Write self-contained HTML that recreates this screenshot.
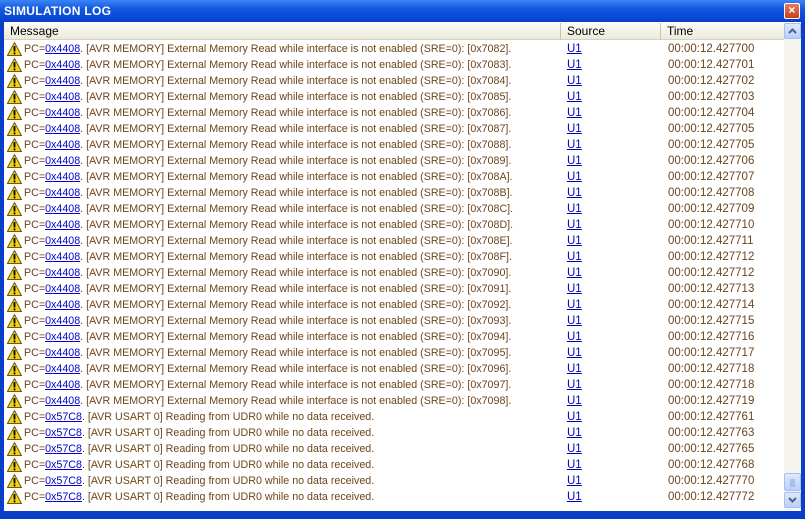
<!DOCTYPE html>
<html><head><style>
*{margin:0;padding:0;box-sizing:border-box}
body{width:805px;height:519px;overflow:hidden;background:#0a3dc8;font-family:"Liberation Sans",sans-serif;position:relative}
#title{position:absolute;left:0;top:0;width:805px;height:22px;background:linear-gradient(#3b85f5,#1358e0 40%,#0a48d6 80%,#0a3fc4);color:#fff;font-weight:bold;font-size:12px;line-height:22px;padding-left:4px;letter-spacing:0.3px}
#close{position:absolute;right:5px;top:3px;width:16px;height:16px;background:linear-gradient(#e87a5a,#c8401c);border:1px solid #fff;border-radius:2px;color:#fff;font-size:12px;line-height:13px;text-align:center;font-weight:bold}
#client{position:absolute;left:4px;top:22px;width:797px;height:489px;background:#fff}
#hdr{position:absolute;left:0;top:1px;width:780px;height:17px;background:linear-gradient(#fcfcf9,#ebeadb);border-bottom:1px solid #d6d2c2;font-size:12px;color:#000;line-height:17px}
#hdr div{position:absolute;top:0;height:17px;padding-left:6px;border-right:1px solid #c7c5b2}
.row{position:absolute;left:0;height:16px;width:780px;font-size:10.7px;line-height:16px;color:#6e4418;white-space:nowrap}
.row a{color:#0000c8;text-decoration:underline}
.ic{position:absolute;left:3px;top:1px;width:15px;height:14px}
.m{position:absolute;left:20px}
.s{position:absolute;left:563px;font-size:11.5px}
.t{position:absolute;left:664px;font-size:11.5px}
#sb{position:absolute;left:780px;top:1px;width:17px;height:487px;background:#f5f4ee}
.btn{position:absolute;left:0;width:17px;height:16px;background:linear-gradient(#dfe9fd,#b9cffa);border:1px solid #a8bff0;border-radius:2px}
</style></head><body>
<div id="title">SIMULATION LOG<div id="close">×</div></div>
<div id="client">
<div id="hdr"><div style="left:0;width:557px">Message</div><div style="left:557px;width:100px">Source</div><div style="left:657px;width:123px;border:none">Time</div></div>
<div id="rows"></div>
<div id="sb">
<div class="btn" style="top:0"><svg width="15" height="14"><path d="M4 9 L7.5 5.5 L11 9" stroke="#4d6185" stroke-width="2" fill="none"/></svg></div>
<div class="btn" style="top:450px;height:18px"><svg width="15" height="16"><path d="M5 6h5M5 8h5M5 10h5M5 12h5" stroke="#8aa4d8"/></svg></div>
<div class="btn" style="top:469px"><svg width="15" height="14"><path d="M4 5 L7.5 8.5 L11 5" stroke="#4d6185" stroke-width="2" fill="none"/></svg></div>
</div>
</div>
<script>
var h='';
var mem=['7082','7083','7084','7085','7086','7087','7088','7089','708A','708B','708C','708D','708E','708F','7090','7091','7092','7093','7094','7095','7096','7097','7098'];
var times=['427700','427701','427702','427703','427704','427705','427705','427706','427707','427708','427709','427710','427711','427712','427712','427713','427714','427715','427716','427717','427718','427718','427719','427761','427763','427765','427768','427770','427772'];
var icon='<svg class="ic" viewBox="0 0 15 14"><path d="M7.5 0.5 L14.5 13.5 L0.5 13.5 Z" fill="#f5d21a" stroke="#6b5a10" stroke-width="1"/><rect x="6.6" y="4" width="1.8" height="5.5" fill="#000"/><rect x="6.6" y="10.5" width="1.8" height="1.8" fill="#000"/></svg>';
for(var i=0;i<29;i++){
 var y=19+16*i,msg;
 if(i<23)msg='PC=<a>0x4408</a>. [AVR MEMORY] External Memory Read while interface is not enabled (SRE=0): [0x'+mem[i]+'].';
 else msg='PC=<a>0x57C8</a>. [AVR USART 0] Reading from UDR0 while no data received.';
 h+='<div class="row" style="top:'+y+'px">'+icon+'<span class="m">'+msg+'</span><span class="s"><a>U1</a></span><span class="t">00:00:12.'+times[i]+'</span></div>';
}
document.getElementById('rows').innerHTML=h;
</script>
</body></html>
